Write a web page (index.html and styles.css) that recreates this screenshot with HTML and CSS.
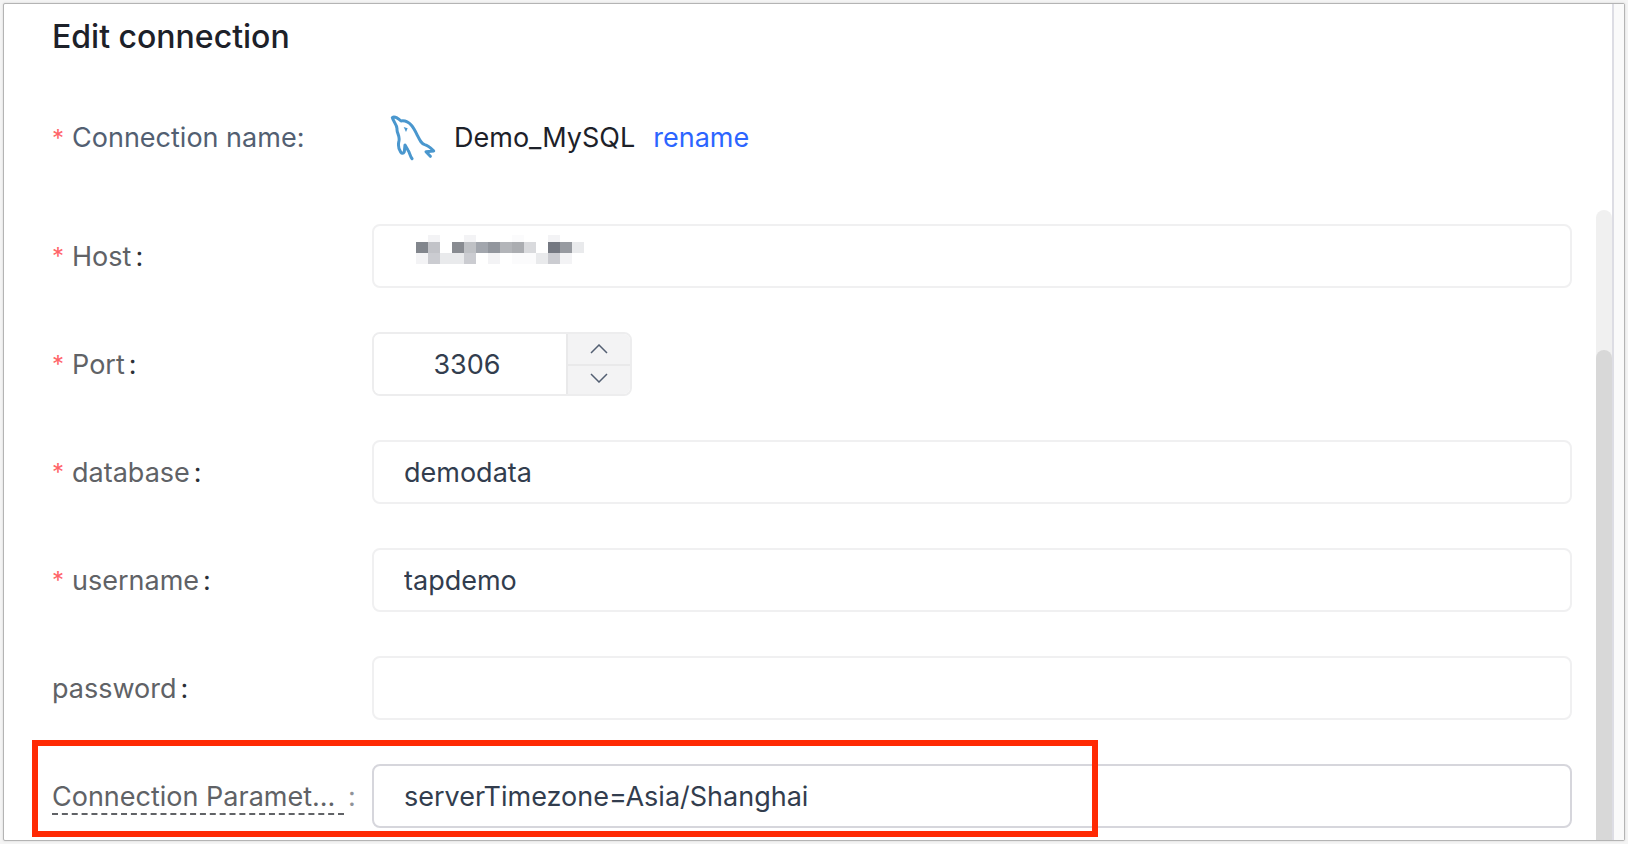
FILE: index.html
```html
<!DOCTYPE html>
<html lang="en">
<head>
<meta charset="utf-8">
<title>Edit connection</title>
<link rel="stylesheet" href="styles.css">
</head>
<body>
<div class="panel">
  <main class="content">
    <h1 class="title">Edit connection</h1>
    <div class="name-row">
      <span class="name-label"><span class="star">*</span>Connection name:</span>
      <svg class="logo" viewBox="30 39 138 144" aria-hidden="true">
        <path d="M96 173 C91 168 89 154 84 148 L75 132 L73 152 Q68 161 62 153 C55 144 54 132 57 119 C60 104 50 96 51 84 C52 72 40 62 37 50 Q45 44 63 60 C89 56 102 82 112 103 C120 119 124 128 134 131 C146 134 154 143 161 150 L138 152 L151 166"/>
        <path class="logo-eye" d="M71 78 L83 82 L78 93 Z"/>
      </svg>
      <span class="name-value">Demo_MySQL</span>
      <a class="rename" href="#">rename</a>
    </div>
    <div class="scroll-area">
      <form class="form">
        <div class="row">
          <label class="label" for="host"><span class="star">*</span>Host<span class="colon">:</span></label>
          <div class="field">
            <input class="input" id="host" type="text">
            <svg class="mosaic" viewBox="0 0 168 29" shape-rendering="crispEdges" aria-hidden="true">
              <g fill="#f3f3f5">
                <rect x="12" y="0" width="12" height="7"/><rect x="48" y="0" width="12" height="7"/>
                <rect x="132" y="0" width="12" height="7"/><rect x="0" y="18" width="12" height="11"/>
                <rect x="72" y="18" width="12" height="11"/><rect x="144" y="18" width="12" height="11"/>
              </g>
              <g fill="#fbfbfc">
                <rect x="96" y="0" width="12" height="7"/><rect x="96" y="18" width="24" height="11"/>
              </g>
              <g fill="#e9eaec">
                <rect x="24" y="18" width="24" height="11"/><rect x="156" y="7" width="12" height="11"/>
                <rect x="120" y="18" width="12" height="11"/>
              </g>
              <g fill="#cbccd1">
                <rect x="12" y="18" width="12" height="11"/><rect x="48" y="18" width="12" height="11"/>
                <rect x="132" y="18" width="12" height="11"/>
              </g>
              <rect x="0" y="7" width="12" height="11" fill="#82868d"/>
              <rect x="12" y="7" width="12" height="11" fill="#c2c3c8"/>
              <rect x="36" y="7" width="12" height="11" fill="#888b91"/>
              <rect x="48" y="7" width="12" height="11" fill="#bfc1c5"/>
              <rect x="60" y="7" width="12" height="11" fill="#a2a6ad"/>
              <rect x="72" y="7" width="12" height="11" fill="#92969d"/>
              <rect x="84" y="7" width="12" height="11" fill="#b3b5b9"/>
              <rect x="96" y="7" width="12" height="11" fill="#abadb1"/>
              <rect x="108" y="7" width="12" height="11" fill="#d9dadd"/>
              <rect x="132" y="7" width="12" height="11" fill="#747881"/>
              <rect x="144" y="7" width="12" height="11" fill="#989ba1"/>
            </svg>
          </div>
        </div>
        <div class="row">
          <label class="label" for="port"><span class="star">*</span>Port<span class="colon">:</span></label>
          <div class="number">
            <input class="number-input" id="port" type="text" inputmode="numeric" value="3306">
            <div class="steps">
              <button class="step" type="button" aria-label="Increase port"><svg class="chevron" viewBox="0 0 18 10"><path d="M1 9 L9 1 L17 9"/></svg></button>
              <button class="step" type="button" aria-label="Decrease port"><svg class="chevron" viewBox="0 0 18 10"><path d="M1 1 L9 9 L17 1"/></svg></button>
            </div>
          </div>
        </div>
        <div class="row">
          <label class="label" for="database"><span class="star">*</span>database<span class="colon">:</span></label>
          <input class="input" id="database" type="text" value="demodata">
        </div>
        <div class="row">
          <label class="label" for="username"><span class="star">*</span>username<span class="colon">:</span></label>
          <input class="input" id="username" type="text" value="tapdemo">
        </div>
        <div class="row">
          <label class="label" for="password">password<span class="colon">:</span></label>
          <input class="input" id="password" type="password">
        </div>
        <div class="row row-marked">
          <label class="label" for="params"><span class="hint">Connection Paramet...</span><span class="colon colon-light">:</span></label>
          <input class="input input-active" id="params" type="text" value="serverTimezone=Asia/Shanghai">
        </div>
      </form>
      <div class="track"><div class="thumb"></div></div>
    </div>
  </main>
  <div class="gutter"></div>
</div>
</body>
</html>
```
FILE: styles.css
```css
* {
  box-sizing: border-box;
}

body {
  margin: 0;
  padding: 3px;
  background: #f4f4f4;
  color: #1d2129;
  font-family: Inter, "Liberation Sans", sans-serif;
  font-size: 27px;
  line-height: 32px;
}

.panel {
  display: flex;
  min-height: calc(100vh - 6px);
  border: 1px solid #b4b4b4;
  border-radius: 2px;
  background: #fff;
  box-shadow: 0 0 2px #ccc;
}

.content {
  flex: 1;
  min-width: 0;
  display: flex;
  flex-direction: column;
}

.gutter {
  width: 12px;
  border-left: 2px solid #dddde4;
  background: #fafafa;
}

.title {
  margin: 13px 0 0 48px;
  font-size: 32px;
  font-weight: 500;
  line-height: 40px;
}

.name-row {
  display: flex;
  align-items: center;
  height: 48px;
  margin: 57px 24px 48px 48px;
}

.name-label {
  width: 338px;
  color: #535f72;
}

.star {
  margin-right: 8px;
  color: #ff6469;
  font-size: 24px;
}

.logo {
  width: 46px;
  height: 48px;
  fill: none;
  stroke: #4a97ce;
  stroke-width: 9;
  stroke-linejoin: round;
  stroke-linecap: round;
}

.logo-eye {
  fill: #4a97ce;
  stroke: none;
}

.name-value {
  margin-left: 18px;
}

.rename {
  margin-left: 18px;
  color: #2c65ff;
  text-decoration: none;
}

.scroll-area {
  flex: 1;
  display: flex;
}

.form {
  flex: 1;
  min-width: 0;
  display: flex;
  flex-direction: column;
  gap: 44px;
  padding: 14px 24px 11px 48px;
}

.row {
  display: flex;
  align-items: center;
}

.label {
  flex: none;
  display: flex;
  align-items: center;
  width: 320px;
  padding-top: 2px;
  color: #606266;
}

.colon {
  margin-left: 4px;
  color: #2b2f36;
}

.colon-light {
  color: #909399;
}

.hint {
  width: 292px;
  padding-top: 2px;
  border-bottom: 2px dashed #606266;
}

.field {
  flex: 1;
  display: flex;
  position: relative;
}

.input {
  flex: 1;
  min-width: 0;
  height: 64px;
  padding: 0 30px;
  border: 2px solid #f0f0f1;
  border-radius: 8px;
  background: #fff;
  color: #323d4e;
  font: inherit;
  outline: none;
}

.input-active {
  border-color: #d6d6dc;
}

.mosaic {
  position: absolute;
  left: 44px;
  top: 11px;
  width: 168px;
  height: 29px;
}

.number {
  display: flex;
  width: 260px;
  height: 64px;
  border: 2px solid #ededee;
  border-radius: 8px;
  overflow: hidden;
}

.number-input {
  flex: 1;
  min-width: 0;
  padding: 2px 6px 0 0;
  border: 0;
  background: #fff;
  color: #323d4e;
  font: inherit;
  text-align: center;
  outline: none;
}

.steps {
  display: flex;
  flex-direction: column;
  width: 64px;
  border-left: 2px solid #e9e9ea;
}

.step {
  height: 50%;
  display: flex;
  align-items: center;
  justify-content: center;
  padding: 0;
  border: 0;
  background: #f3f3f4;
}

.step + .step {
  padding-bottom: 4px;
  border-top: 2px solid #e9e9ea;
}

.chevron {
  width: 18px;
  height: 10px;
  fill: none;
  stroke: #535f72;
  stroke-width: 1.5;
}

.row-marked {
  position: relative;
}

.row-marked::after {
  content: "";
  position: absolute;
  top: -24px;
  right: 474px;
  bottom: -9px;
  left: -20px;
  border: 6px solid #ff2a04;
  pointer-events: none;
}

.track {
  width: 16px;
  padding-top: 140px;
  border-radius: 8px 8px 0 0;
  background: #f0f0f0;
}

.thumb {
  height: 100%;
  border-radius: 8px 8px 0 0;
  background: #d8d8d8;
}
```
